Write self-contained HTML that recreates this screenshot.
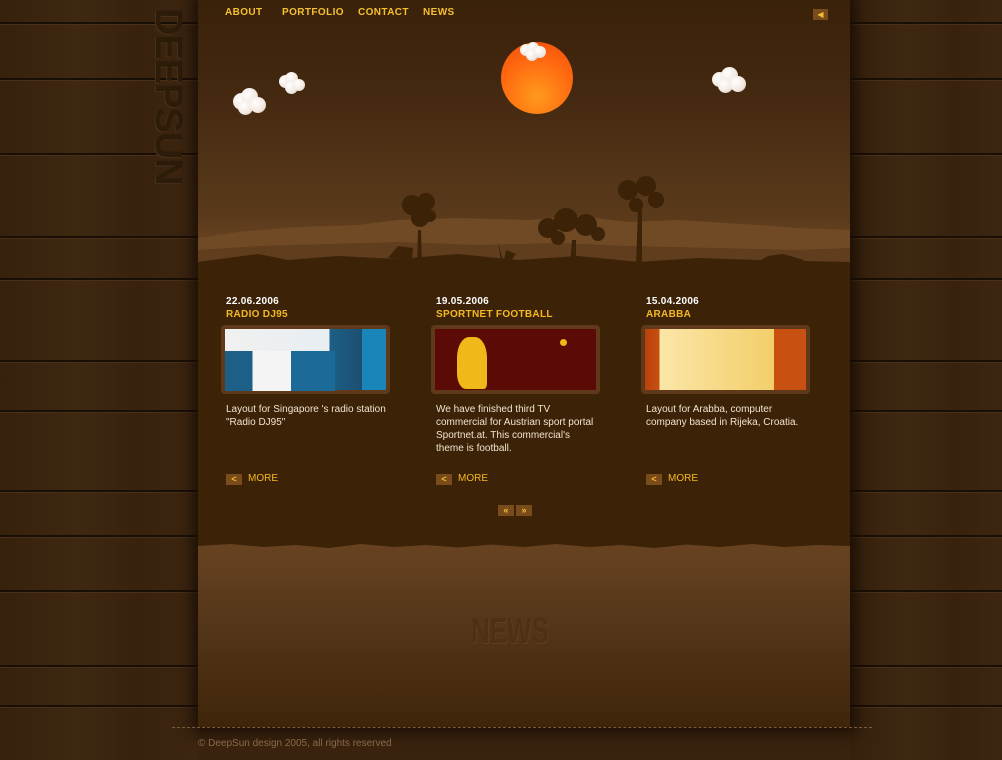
<!DOCTYPE html>
<html><head><meta charset="utf-8"><style>
*{margin:0;padding:0;box-sizing:border-box}
body{width:1002px;height:760px;overflow:hidden;background:#3a230f;font-family:"Liberation Sans",sans-serif;position:relative}
.wood{position:absolute;top:0;height:760px;background:linear-gradient(90deg,#36210d,#3f2812 40%,#38220e 70%,#3d2611)}
.plank{position:absolute;left:0;right:0;height:2px;background:#1a0f05;box-shadow:0 1px 0 #4a3019}
#main{position:absolute;left:198px;top:0;width:652px;height:727px;box-shadow:0 0 14px 6px rgba(20,10,2,.8)}
#sky{position:absolute;left:0;top:0;width:652px;height:290px;background:linear-gradient(#3a2109 0%,#432810 30%,#5a3a1b 75%,#6a4422 85%)}
#content{position:absolute;left:0;top:270px;width:652px;height:275px;background:#3c2207}
#lower{position:absolute;left:0;top:540px;width:652px;height:187px;background:linear-gradient(#684321,#55361a 45%,#3e2509)}
.nav{position:absolute;top:7px;font:bold 10px "Liberation Sans",sans-serif;color:#f5c030;letter-spacing:.4px}
.col{position:absolute;top:296px;width:165px}
.date{font:bold 10px "Liberation Sans",sans-serif;color:#fff;letter-spacing:.3px}
.title{font:bold 10px "Liberation Sans",sans-serif;color:#f5b922;margin-top:2px;letter-spacing:.3px}
.thumb{margin-top:5px;width:169px;height:69px;border:4px solid #5e3a1a;border-radius:4px;margin-left:-5px}
.desc{margin-top:9px;font:10px/13px "Liberation Sans",sans-serif;color:#f0e4d0;width:160px}
.more{position:absolute;top:473px;font:10px "Liberation Sans",sans-serif;color:#f5b922}
.more b{display:inline-block;width:16px;height:11px;background:#7a4c1c;color:#f5b922;font-size:9px;text-align:center;line-height:11px;margin-right:6px;vertical-align:-1px}
.cloud{position:absolute}
.cloud i{position:absolute;border-radius:50%;background:radial-gradient(circle at 35% 35%,#fff,#f2e8e0 60%,#c8b8aa)}
</style></head><body>
<div class="wood" style="left:0;width:198px"></div>
<div class="wood" style="left:850px;width:152px"></div>
<div style="position:absolute;left:0;top:0;width:1002px;height:760px">
<div class="plank" style="top:22px"></div><div class="plank" style="top:78px"></div><div class="plank" style="top:153px"></div><div class="plank" style="top:236px"></div><div class="plank" style="top:278px"></div><div class="plank" style="top:360px"></div><div class="plank" style="top:410px"></div><div class="plank" style="top:490px"></div><div class="plank" style="top:535px"></div><div class="plank" style="top:590px"></div><div class="plank" style="top:665px"></div><div class="plank" style="top:705px"></div>
</div>
<div style="position:absolute;left:146px;top:8px;width:44px;height:168px;">
<div style="position:absolute;left:-62px;top:62px;width:168px;height:44px;transform:rotate(90deg);font:bold 38px/44px 'Liberation Sans',sans-serif;color:#2e1c0a;text-shadow:1px 1px 0 #48301a;letter-spacing:-1px;text-align:center">DEEPSUN</div></div>
<div id="main">
<div id="sky"></div>
<svg style="position:absolute;left:0;top:170px" width="652" height="110" viewBox="0 0 652 110">
<path d="M0 68 L40 62 L100 57 L160 55 L200 50 L260 48 L330 50 L380 46 L430 52 L480 50 L560 55 L600 58 L652 60 V110 H0Z" fill="#704a25"/>
<path d="M0 80 L60 76 L130 74 L200 72 L280 75 L360 73 L430 76 L520 78 L600 80 L652 78 V110 H0Z" fill="#5f3d1d"/>
<path d="M0 92 L30 88 L60 84 L90 90 L140 86 L200 89 L260 84 L320 90 L380 86 L440 92 L500 88 L560 90 L652 92 V110 H0Z" fill="#3c2207"/>
<g fill="#3c2207">
<path d="M219 98 L220 60 L223 60 L224 98Z"/>
<circle cx="214" cy="35" r="10"/><circle cx="228" cy="32" r="9"/><circle cx="222" cy="48" r="9"/><circle cx="232" cy="46" r="6"/>
<path d="M372 96 L374 70 L378 70 L378 96Z"/>
<circle cx="350" cy="58" r="10"/><circle cx="368" cy="50" r="12"/><circle cx="388" cy="55" r="11"/><circle cx="400" cy="64" r="7"/><circle cx="360" cy="68" r="7"/>
<path d="M438 96 L440 40 L444 40 L444 96Z"/>
<circle cx="430" cy="20" r="10"/><circle cx="448" cy="16" r="10"/><circle cx="458" cy="30" r="8"/><circle cx="438" cy="35" r="7"/>
<path d="M190 88 L200 76 L215 78 L214 90Z"/>
<path d="M300 72 L303 90 L306 90 L308 80 L318 84 L312 92 L305 90Z"/>
<path d="M560 92 L570 86 L585 84 L606 90 L600 96 L565 96Z"/>
</g>
</svg>
<div id="content"></div>
<div id="lower"></div>
<div style="position:absolute;left:0;top:540px;width:652px;height:10px;background:#3c2207;clip-path:polygon(0 60%,5% 40%,10% 70%,15% 50%,20% 80%,25% 40%,30% 70%,35% 50%,40% 75%,45% 45%,50% 70%,55% 40%,60% 70%,65% 50%,70% 80%,75% 45%,80% 70%,85% 40%,90% 70%,95% 50%,100% 60%,100% 0,0 0)"></div>
<div style="position:absolute;left:273px;top:610px;font:bold 36px 'Liberation Sans',sans-serif;color:#4e3015;transform:scaleX(.72);transform-origin:left;text-shadow:1px 1px 0 #614020"> NEWS</div>
</div>
<div class="nav" style="left:225px">ABOUT</div>
<div class="nav" style="left:282px">PORTFOLIO</div>
<div class="nav" style="left:358px">CONTACT</div>
<div class="nav" style="left:423px">NEWS</div>
<div style="position:absolute;left:813px;top:9px;width:15px;height:11px;background:#7a4c1c;color:#f5c030;font-size:8px;line-height:11px;text-align:center">◀</div>
<div style="position:absolute;left:501px;top:42px;width:72px;height:72px;border-radius:50%;background:radial-gradient(circle at 50% 75%,#ff9a1c,#ff6a10 55%,#f04a08)"></div>
<div class="cloud" style="left:233px;top:88px"><i style="left:0;top:5px;width:17px;height:17px"></i><i style="left:8px;top:0;width:17px;height:17px"></i><i style="left:5px;top:12px;width:15px;height:15px"></i><i style="left:17px;top:9px;width:16px;height:16px"></i></div>
<div class="cloud" style="left:279px;top:72px"><i style="left:0;top:3px;width:13px;height:13px"></i><i style="left:6px;top:0;width:13px;height:13px"></i><i style="left:6px;top:9px;width:13px;height:13px"></i><i style="left:14px;top:7px;width:12px;height:12px"></i></div>
<div class="cloud" style="left:520px;top:42px"><i style="left:0;top:2px;width:12px;height:12px"></i><i style="left:7px;top:0;width:12px;height:12px"></i><i style="left:6px;top:7px;width:12px;height:12px"></i><i style="left:14px;top:4px;width:12px;height:12px"></i></div>
<div class="cloud" style="left:712px;top:67px"><i style="left:0;top:5px;width:15px;height:15px"></i><i style="left:9px;top:0;width:17px;height:17px"></i><i style="left:6px;top:11px;width:15px;height:15px"></i><i style="left:18px;top:9px;width:16px;height:16px"></i></div>

<div class="col" style="left:226px"><div class="date">22.06.2006</div><div class="title">RADIO DJ95</div>
<div class="thumb" style="background:linear-gradient(90deg,#f0f0f0 0,#e8eef2 65%,#1d5f86 65%,#1c4f72 85%,#1a85b8 85%);position:relative"><div style="position:absolute;left:0;top:22px;width:110px;height:40px;background:linear-gradient(90deg,#1d5f86 25%,#f4f4f4 25%,#f4f4f4 60%,#1c6a98 60%)"></div></div>
<div class="desc">Layout for Singapore 's radio station "Radio DJ95"</div></div>
<div class="col" style="left:436px"><div class="date">19.05.2006</div><div class="title">SPORTNET FOOTBALL</div>
<div class="thumb" style="background:#5c0a06;position:relative"><div style="position:absolute;left:22px;top:8px;width:30px;height:52px;background:#f0b818;border-radius:40% 40% 10% 30%"></div><div style="position:absolute;left:125px;top:10px;width:7px;height:7px;border-radius:50%;background:#f0b818"></div></div>
<div class="desc">We have finished third TV commercial for Austrian sport portal Sportnet.at. This commercial's theme is football.</div></div>
<div class="col" style="left:646px"><div class="date">15.04.2006</div><div class="title">ARABBA</div>
<div class="thumb" style="background:linear-gradient(90deg,#b8420c 0,#c85010 9%,#fbe6a8 9%,#f3cf6a 80%,#c85010 80%)"></div>
<div class="desc">Layout for Arabba, computer company based in Rijeka, Croatia.</div></div>
<div class="more" style="left:226px"><b>&lt;</b>MORE</div>
<div class="more" style="left:436px"><b>&lt;</b>MORE</div>
<div class="more" style="left:646px"><b>&lt;</b>MORE</div>
<div style="position:absolute;left:498px;top:505px;width:16px;height:11px;background:#7a4c1c;color:#f5c030;font:bold 9px/11px sans-serif;text-align:center">«</div>
<div style="position:absolute;left:516px;top:505px;width:16px;height:11px;background:#7a4c1c;color:#f5c030;font:bold 9px/11px sans-serif;text-align:center">»</div>
<div style="position:absolute;left:172px;top:727px;width:700px;border-top:1px dashed #7a5a3a"></div>
<div style="position:absolute;left:198px;top:738px;font:10px 'Liberation Sans',sans-serif;color:#8a6a48">© DeepSun design 2005, all rights reserved</div>
</body></html>
